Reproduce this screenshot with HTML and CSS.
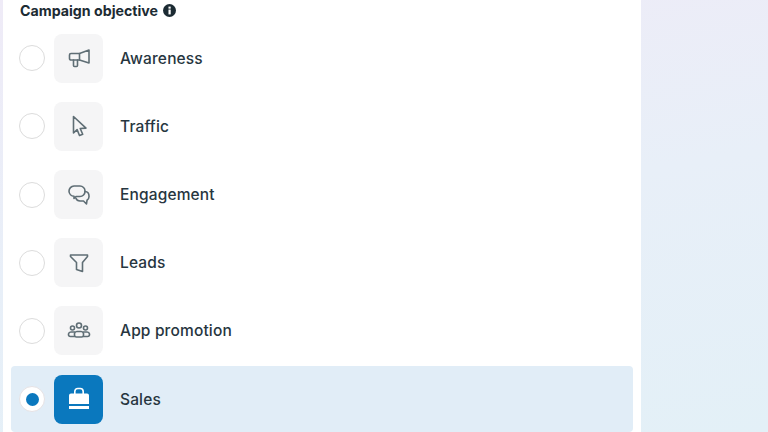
FILE: index.html
```html
<!DOCTYPE html>
<html lang="en">
<head>
<meta charset="utf-8">
<title>Campaign objective</title>
<link rel="stylesheet" href="styles.css">
</head>
<body>
<main class="panel">
  <h1 class="heading">Campaign objective
    <svg class="info" viewBox="0 0 14 14"><circle cx="7" cy="7" r="7" fill="#1c2b33"/><rect x="5.900" y="6" width="2.400" height="5.200" fill="#fff"/><rect x="5.900" y="2.800" width="2.400" height="2.200" fill="#fff"/></svg>
  </h1>
  <ul class="list">
    <li class="row">
      <span class="radio"></span>
      <span class="tile"><svg class="icon" viewBox="0 0 24 24"><path d="M4 7.500h8.500L22 4v13l-9.500-3H4a1.500 1.500 0 0 1-1.500-1.500V9A1.500 1.500 0 0 1 4 7.500z"/><path d="M12.500 7.500V14M6.500 14v5.500a1 1 0 0 0 1 1h2a1 1 0 0 0 1-1V14"/></svg></span>
      <span class="label">Awareness</span>
    </li>
    <li class="row">
      <span class="radio"></span>
      <span class="tile"><svg class="icon" viewBox="0 0 24 24"><path d="M6.500 2.500v16.500l3.600-3.400 2.400 5.900 3.200-1.300-2.500-5.700 5.800-.4z"/></svg></span>
      <span class="label">Traffic</span>
    </li>
    <li class="row">
      <span class="radio"></span>
      <span class="tile"><svg class="icon" viewBox="0 0 24 24"><path d="M7 3h6a5 5 0 0 1 5 5v.5a5 5 0 0 1-5 5H9l-2 2v-2.200A5.200 5.200 0 0 1 2 8.300 5.200 5.200 0 0 1 7 3z"/><path d="M18 8.500a4.500 4.500 0 0 1 4 4.500v.8a4.300 4.300 0 0 1-2 3.500l-.500 3.700-3-3h-3.500a4.500 4.500 0 0 1-4.200-3"/></svg></span>
      <span class="label">Engagement</span>
    </li>
    <li class="row">
      <span class="radio"></span>
      <span class="tile"><svg class="icon" viewBox="0 0 24 24"><path d="M3.500 4h17v1.500l-5 6v9l-6-2v-7l-6-6z"/></svg></span>
      <span class="label">Leads</span>
    </li>
    <li class="row">
      <span class="radio"></span>
      <span class="tile"><svg class="icon" viewBox="0 0 24 24"><circle cx="12" cy="6.500" r="2.500"/><circle cx="5.500" cy="9" r="2"/><circle cx="18.500" cy="9" r="2"/><path d="M7.500 14.500a2.500 2.500 0 0 1 2.500-2h4a2.500 2.500 0 0 1 2.500 2v1.500a2 2 0 0 1-2 2h-5a2 2 0 0 1-2-2z"/><path d="M7.500 17.500H3.500a2 2 0 0 1-2-2v-.5a2.500 2.500 0 0 1 2.500-2h3.500M16.500 17.500h4a2 2 0 0 0 2-2v-.5a2.500 2.500 0 0 0-2.500-2h-3.500"/></svg></span>
      <span class="label">App promotion</span>
    </li>
    <li class="row row-selected">
      <span class="radio radio-on"></span>
      <span class="tile tile-on"><svg class="icon" viewBox="0 0 24 24"><path class="bag-handle" d="M7.800 7V4.500a3 3 0 0 1 3-3h2.400a3 3 0 0 1 3 3V7"/><path class="bag-fill" d="M4 6.500h16a2 2 0 0 1 2 2V17H2V8.500a2 2 0 0 1 2-2z"/><rect class="bag-fill" x="2" y="19" width="20" height="3"/></svg></span>
      <span class="label">Sales</span>
    </li>
  </ul>
</main>
</body>
</html>
```
FILE: styles.css
```css
html, body {
  margin: 0;
  height: 432px;
  overflow: hidden;
}
body {
  background: linear-gradient(170deg, #efebf7 0%, #e8eff8 50%, #e3f0f7 100%);
  font-family: Inter, "Noto Sans", "Liberation Sans", sans-serif;
  color: #1c2b33;
}
.panel {
  width: 638px;
  height: 432px;
  margin-left: 3px;
  background: #fff;
  box-sizing: border-box;
}
.heading {
  display: flex;
  align-items: center;
  gap: 5px;
  margin: 0;
  height: 21.200px;
  padding: 0 0 4px 17px;
  font-size: 14.200px;
  font-weight: 700;
  color: #1c2b33;
}
.info {
  width: 13px;
  height: 13px;
}
.list {
  list-style: none;
  margin: 0;
  padding: 0 8px;
  display: flex;
  flex-direction: column;
  gap: 2.200px;
}
.row {
  display: flex;
  align-items: center;
  height: 66px;
  padding-left: 8px;
  border-radius: 4px;
}
.row-selected {
  background: #e1edf7;
}
.radio {
  flex: none;
  box-sizing: border-box;
  width: 26px;
  height: 26px;
  border: 1px solid #dcdcdc;
  border-radius: 50%;
  background: #fff;
}
.radio-on {
  display: flex;
  align-items: center;
  justify-content: center;
  border: 1px solid #e6e2e4;
}
.radio-on::after {
  content: "";
  width: 13px;
  height: 13px;
  border-radius: 50%;
  background: #0a78be;
}
.tile {
  flex: none;
  display: flex;
  align-items: center;
  justify-content: center;
  width: 49px;
  height: 49px;
  margin-left: 9px;
  border-radius: 8px;
  background: #f5f5f6;
}
.tile-on {
  background: #0a78be;
}
.icon {
  width: 24px;
  height: 24px;
  fill: none;
  stroke: #5f6e75;
  stroke-width: 1.600;
  stroke-linejoin: round;
  stroke-linecap: round;
}
.bag-fill {
  fill: #fff;
  stroke: none;
}
.bag-handle {
  stroke: #fff;
}
.label {
  margin-left: 17px;
  font-size: 15.500px;
  font-weight: 500;
  letter-spacing: 0.150px;
  color: #27363f;
}
```
